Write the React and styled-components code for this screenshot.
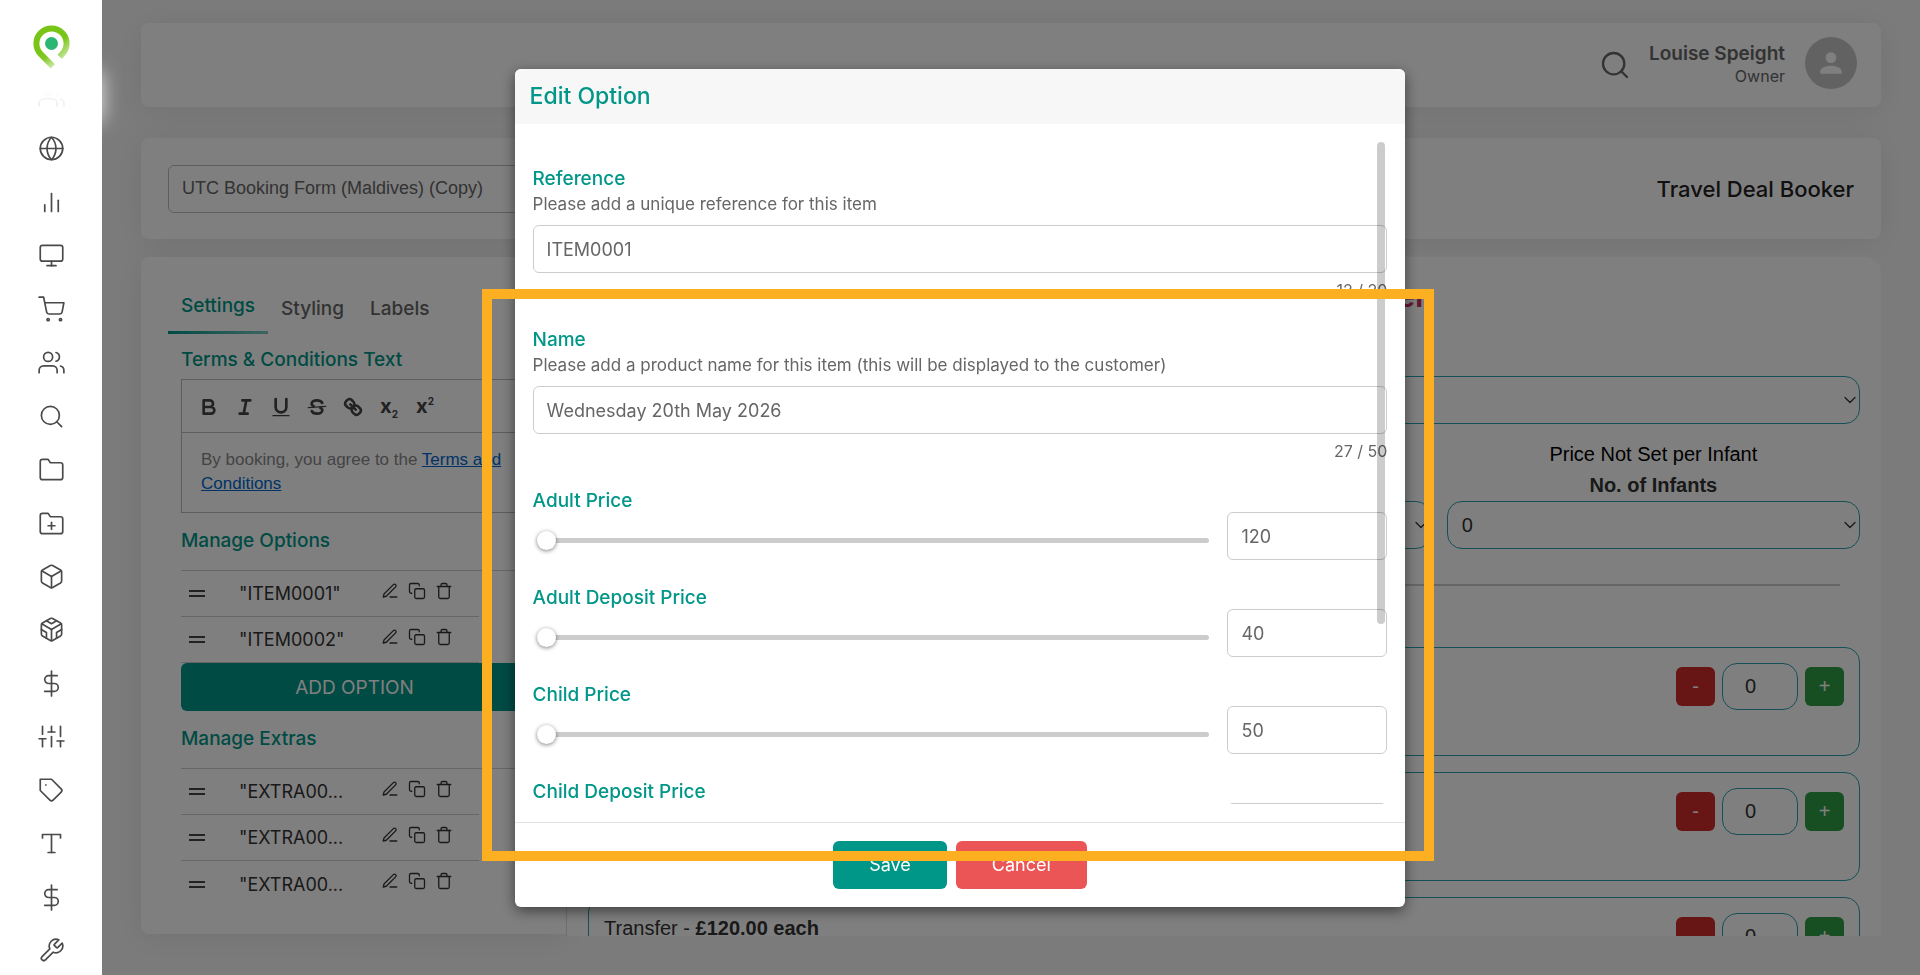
import { useState } from "react";
import styled, { createGlobalStyle } from "styled-components";
import {
  FiBarChart2, FiBox, FiChevronDown, FiCodesandbox, FiCopy, FiDollarSign, FiEdit3, FiFolder,
  FiFolderPlus, FiGlobe, FiMonitor, FiSearch, FiShoppingCart, FiSliders, FiTag, FiTool,
  FiTrash, FiType, FiUsers,
} from "react-icons/fi";
import { MdPerson } from "react-icons/md";

const NAV = [
  ["Team", FiUsers],
  ["Website", FiGlobe],
  ["Analytics", FiBarChart2],
  ["Displays", FiMonitor],
  ["Shop", FiShoppingCart],
  ["Customers", FiUsers],
  ["Search", FiSearch],
  ["Folders", FiFolder],
  ["New folder", FiFolderPlus],
  ["Products", FiBox],
  ["Packages", FiCodesandbox],
  ["Payments", FiDollarSign],
  ["Controls", FiSliders],
  ["Tags", FiTag],
  ["Text", FiType],
  ["Pricing", FiDollarSign],
  ["Tools", FiTool],
];

const PRICES = [
  ["Adult Price", "120"],
  ["Adult Deposit Price", "40"],
  ["Child Price", "50"],
  ["Child Deposit Price", "20"],
];

export default function App() {
  return (
    <Shell>
      <GlobalStyle />
      <Sidebar />
      <Main>
        <TopBar />
        <FormBar>
          <FormName aria-label="Form name" defaultValue="UTC Booking Form (Maldives) (Copy)" />
          <FormType>Travel Deal Booker</FormType>
        </FormBar>
        <Workspace>
          <SettingsPanel />
          <Preview />
        </Workspace>
      </Main>
      <Overlay>
        <EditOption />
      </Overlay>
    </Shell>
  );
}

function Sidebar() {
  return (
    <Side>
      <Brand href="#home" aria-label="Home">
        <svg width="37" height="44" viewBox="0 0 37 44" fill="none">
          <defs>
            <linearGradient id="tail" gradientUnits="userSpaceOnUse" x1="12" y1="33" x2="22" y2="43">
              <stop offset="0" stopColor="#79c517" />
              <stop offset="1" stopColor="#c9e8a4" />
            </linearGradient>
          </defs>
          <path
            d="M26.7 31.8L29.2 29.2A15.1 15.1 0 1 0 7.8 29.2L19.8 41.3"
            stroke="url(#tail)"
            strokeWidth="6"
          />
          <circle cx="18.5" cy="18.5" r="6.5" fill="#2bb673" />
        </svg>
      </Brand>
      <Nav>
        {NAV.map(([label, Icon], i) => (
          <NavLink key={i} href="#nav" aria-label={label}>
            <Icon />
          </NavLink>
        ))}
      </Nav>
      <NavFade />
    </Side>
  );
}

function TopBar() {
  return (
    <Header>
      <SearchButton aria-label="Search">
        <FiSearch />
      </SearchButton>
      <User>
        <strong>Louise Speight</strong>
        <span>Owner</span>
      </User>
      <Avatar>
        <MdPerson />
      </Avatar>
    </Header>
  );
}

function SettingsPanel() {
  return (
    <Settings>
      <Tabs>
        <Tab $active>Settings</Tab>
        <Tab>Styling</Tab>
        <Tab>Labels</Tab>
      </Tabs>
      <Section>
        <SectionTitle>Terms &amp; Conditions Text</SectionTitle>
        <Editor>
          <Toolbar>
            <Tool aria-label="Bold">
              <ToolIcon>
                <path d="M5 4h4.5a2.5 2.5 0 0 1 0 5H5zM5 9h5.5a2.5 2.5 0 0 1 0 5H5z" />
              </ToolIcon>
            </Tool>
            <Tool aria-label="Italic">
              <ToolIcon>
                <path d="M7 4h6M5 14h6M8 14l2-10" />
              </ToolIcon>
            </Tool>
            <Tool aria-label="Underline">
              <ToolIcon>
                <path d="M5 3v6a4 4 0 0 0 8 0V3" />
                <path d="M3 15.5h12" strokeWidth="1" />
              </ToolIcon>
            </Tool>
            <Tool aria-label="Strikethrough">
              <ToolIcon>
                <path d="M2.5 9.5l13-1" strokeWidth="1" />
                <path d="M12.9 6C12.5 4.8 11 4 9 4 6.8 4 5 5 5 6.5c0 1 .6 1.5 1.5 1.8M5.1 12C5.5 13.2 7 14 9 14c2.2 0 4-1 4-2.5 0-1-.6-1.5-1.5-1.8" />
              </ToolIcon>
            </Tool>
            <Tool aria-label="Link">
              <ToolIcon>
                <path d="M7 7l4 4" />
                <path d="M8.9 4.6a3.5 3.5 0 0 1 .4 4.7A3.5 3.5 0 0 1 4.6 8.9C3.2 7.5 2 6.4 4.2 4.2S7.5 3.2 8.9 4.6Z" />
                <path d="M13.4 9.1a3.5 3.5 0 0 0-4.7-.4 3.5 3.5 0 0 0 .4 4.7c1.4 1.4 2.5 2.5 4.7.4S14.8 10.5 13.4 9.1Z" />
              </ToolIcon>
            </Tool>
            <Tool aria-label="Subscript">x<sub>2</sub></Tool>
            <Tool aria-label="Superscript">x<sup>2</sup></Tool>
          </Toolbar>
          <EditorBody>
            By booking, you agree to the <a href="#terms">Terms and Conditions</a>
          </EditorBody>
        </Editor>
        <SectionTitle>Manage Options</SectionTitle>
        <ItemList items={['"ITEM0001"', '"ITEM0002"']} />
        <AddButton>ADD OPTION</AddButton>
        <SectionTitle>Manage Extras</SectionTitle>
        <ItemList items={['"EXTRA00...', '"EXTRA00...', '"EXTRA00...']} open />
      </Section>
    </Settings>
  );
}

function ItemList({ items, open }) {
  return (
    <List>
      {items.map((item, i) => (
        <Item key={i} $line={!open || i < items.length - 1}>
          <Handle />
          <ItemName>{item}</ItemName>
          <Actions>
            <RowButton aria-label="Edit"><FiEdit3 /></RowButton>
            <RowButton aria-label="Duplicate"><FiCopy /></RowButton>
            <RowButton aria-label="Delete"><FiTrash /></RowButton>
          </Actions>
        </Item>
      ))}
    </List>
  );
}

function Preview() {
  return (
    <PreviewPane>
      <PreviewTitle>Maldives Travel Deal Booker</PreviewTitle>
      <Dropdown label="Departure date" />
      <Guests>
        <Guest price="£120.00 per Adult" label="No. of Adults" value="0" />
        <Guest price="£50.00 per Child" label="No. of Children" value="0" />
        <Guest price="Price Not Set per Infant" label="No. of Infants" value="0" />
      </Guests>
      <Rule />
      <Extra name="Snorkelling" price="£60.00 each" />
      <Extra name="Dinner" price="£45.00 each" />
      <Extra name="Transfer" price="£120.00 each" />
    </PreviewPane>
  );
}

function Guest({ price, label, value }) {
  return (
    <GuestColumn>
      <span>{price}</span>
      <strong>{label}</strong>
      <Dropdown label={label} value={value} />
    </GuestColumn>
  );
}

function Dropdown({ label, value = "" }) {
  return (
    <SelectBox>
      <select aria-label={label} defaultValue={value}>
        <option value={value}>{value}</option>
      </select>
      <FiChevronDown />
    </SelectBox>
  );
}

function Extra({ name, price }) {
  const [count, setCount] = useState(0);

  return (
    <ExtraCard>
      <ExtraName>{name} - <b>{price}</b></ExtraName>
      <Step $color="#cf2a2a" onClick={() => setCount(Math.max(0, count - 1))}>-</Step>
      <Count
        aria-label={`${name} quantity`}
        value={count}
        onChange={(e) => setCount(Number(e.target.value) || 0)}
      />
      <Step $color="#2f9e44" onClick={() => setCount(count + 1)}>+</Step>
    </ExtraCard>
  );
}

function EditOption() {
  return (
    <Dialog role="dialog" aria-labelledby="dialog-title">
      <DialogTitle id="dialog-title">Edit Option</DialogTitle>
      <DialogBody>
        <Fields>
          <TextField
            id="reference"
            label="Reference"
            hint="Please add a unique reference for this item"
            value="ITEM0001"
            count="12 / 20"
          />
          <TextField
            id="name"
            label="Name"
            hint="Please add a product name for this item (this will be displayed to the customer)"
            value="Wednesday 20th May 2026"
            count="27 / 50"
          />
          {PRICES.map(([label, value]) => (
            <PriceField key={label} label={label} value={value} />
          ))}
        </Fields>
        <Thumb />
      </DialogBody>
      <DialogFooter>
        <Button $color="#009688">Save</Button>
        <Button $color="#eb5555">Cancel</Button>
      </DialogFooter>
      <Highlight />
    </Dialog>
  );
}

function TextField({ id, label, hint, value, count }) {
  return (
    <Field>
      <Label htmlFor={id}>{label}</Label>
      <Hint>{hint}</Hint>
      <Input id={id} defaultValue={value} />
      <Counter>{count}</Counter>
    </Field>
  );
}

function PriceField({ label, value }) {
  const id = label.toLowerCase().replace(/ /g, "-");

  return (
    <Price>
      <Label htmlFor={id}>{label}</Label>
      <PriceRow>
        <Slider type="range" min="0" max="100000" defaultValue="0" aria-label={`${label} slider`} />
        <Input id={id} defaultValue={value} />
      </PriceRow>
    </Price>
  );
}

const GlobalStyle = createGlobalStyle`
  :root {
    --teal: #009688;
    --text: #666;
    --outline: #2aa0ac;
    --sans: Inter, sans-serif;
    --arial: "Liberation Sans", Arial, sans-serif;
  }
  * {
    box-sizing: border-box;
  }
  body {
    margin: 0;
    font-family: var(--sans);
    color: var(--text);
  }
  button, input, select {
    font-family: inherit;
    color: inherit;
  }
  button {
    border: 0;
    padding: 0;
    background: none;
    cursor: pointer;
  }
`;

const Shell = styled.div`
  display: flex;
  height: 100vh;
  overflow: hidden;
  background: #f7f7f7;
`;

const Side = styled.aside`
  position: relative;
  z-index: 10;
  flex: 0 0 102px;
  display: flex;
  flex-direction: column;
  background: #fff;
`;

const Brand = styled.a`
  height: 82px;
  padding: 25px 0 0 33px;
`;

const Nav = styled.nav`
  flex: 1;
  display: flex;
  flex-direction: column;
  align-items: center;
  justify-content: space-between;
  padding-bottom: 11px;
`;

const NavLink = styled.a`
  display: flex;
  color: #4a4a4a;
  svg {
    width: 27px;
    height: 27px;
    stroke-width: 1.5;
  }
`;

const NavFade = styled.div`
  position: absolute;
  top: 72px;
  left: 0;
  width: 100%;
  height: 50px;
  background: linear-gradient(#fff 36%, rgba(255, 255, 255, 0.8));
  box-shadow: 0 0 20px rgba(255, 255, 255, 0.8);
`;

const Main = styled.main`
  flex: 1;
  min-width: 0;
  display: flex;
  flex-direction: column;
  padding: 23px 39px 39px;
`;

const Card = styled.section`
  background: #fff;
  border-radius: 8px;
  box-shadow: 0 4px 32px rgba(0, 0, 0, 0.08);
`;

const Header = styled(Card)`
  display: flex;
  align-items: center;
  justify-content: flex-end;
  height: 84px;
  padding: 0 24px 4px;
  margin-bottom: 31px;
`;

const IconButton = styled.button`
  display: flex;
  svg {
    stroke-width: 1.75;
  }
`;

const SearchButton = styled(IconButton)`
  margin-top: 4px;
  svg {
    width: 32px;
    height: 32px;
  }
`;

const RowButton = styled(IconButton)`
  color: #333;
  svg {
    width: 18px;
    height: 18px;
  }
`;

const User = styled.div`
  display: flex;
  flex-direction: column;
  align-items: flex-end;
  margin: 4px 20px 0 18px;
  line-height: 23px;
  strong {
    font-size: 19px;
    font-weight: 600;
  }
  span {
    font-size: 16px;
  }
`;

const Avatar = styled.div`
  display: flex;
  align-items: center;
  justify-content: center;
  width: 52px;
  height: 52px;
  border-radius: 50%;
  background: #c4c4c4;
  color: #fff;
  svg {
    width: 32px;
    height: 32px;
  }
`;

const FormBar = styled(Card)`
  display: flex;
  align-items: center;
  justify-content: space-between;
  height: 101px;
  padding: 0 27px;
  margin-bottom: 18px;
`;

const FormName = styled.input`
  width: 30%;
  height: 48px;
  padding: 0 13px;
  border: 1px solid #bbb;
  border-radius: 6px;
  background: #fff;
  font-family: var(--arial);
  font-size: 18px;
`;

const FormType = styled.span`
  color: #222;
  font-size: 22px;
  font-weight: 500;
`;

const Workspace = styled.div`
  flex: 1;
  min-height: 0;
  display: flex;
  align-items: stretch;
`;

const Settings = styled(Card)`
  flex: 0 0 425px;
  padding: 25px 27px 0;
  margin-bottom: 2px;
  border-bottom-right-radius: 0;
`;

const Tabs = styled.div`
  display: flex;
`;

const Tab = styled.button`
  height: 52px;
  padding: 0 13px;
  padding-bottom: ${({ $active }) => ($active ? 2 : 0)}px;
  border-bottom: ${({ $active }) => ($active ? "3px solid" : 0)};
  border-image: linear-gradient(to right, #009688, #7fcac3) 1;
  color: ${({ $active }) => ($active ? "var(--teal)" : "var(--text)")};
  font-size: 19px;
  font-weight: 500;
`;

const Section = styled.div`
  padding: 15px 11px 0 13px;
`;

const SectionTitle = styled.h3`
  margin: 0;
  color: var(--teal);
  font-size: 19px;
  font-weight: 500;
  line-height: 22px;
`;

const Editor = styled.div`
  margin: 8px 0 17px;
  border: 1px solid #bbb;
  font-family: var(--arial);
`;

const Toolbar = styled.div`
  display: flex;
  align-items: center;
  height: 53px;
  padding-left: 9px;
  border-bottom: 1px solid #bbb;
`;

const Tool = styled.button`
  width: 36px;
  height: 36px;
  color: #444;
  font-family: var(--sans);
  font-size: 20px;
  font-weight: 700;
  line-height: 24px;
  svg {
    vertical-align: middle;
  }
  sub, sup {
    font-size: 10px;
    line-height: 0;
  }
`;

const ToolIcon = styled.svg.attrs({ viewBox: "0 0 18 18", width: 24, height: 24 })`
  fill: none;
  stroke: currentColor;
  stroke-width: 2;
  stroke-linecap: round;
  stroke-linejoin: round;
`;

const EditorBody = styled.div`
  height: 79px;
  padding: 15px 19px;
  color: #888;
  font-size: 17px;
  line-height: 24px;
  a {
    color: #06c;
  }
`;

const List = styled.ul`
  margin: 18px 0 0;
  padding: 0;
  border-top: 1px solid #ccc;
  list-style: none;
`;

const Item = styled.li`
  display: flex;
  align-items: center;
  height: 46px;
  margin-right: 49px;
  padding-left: 8px;
  border-bottom: ${({ $line }) => ($line ? "1px solid #ccc" : 0)};
  color: #333;
`;

const Handle = styled.span`
  width: 16px;
  height: 7px;
  margin-right: 34px;
  border: solid #444;
  border-width: 2px 0;
`;

const ItemName = styled.span`
  width: 142px;
  font-size: 18px;
`;

const Actions = styled.div`
  display: flex;
  gap: 9px;
  padding-bottom: 6px;
`;

const AddButton = styled.button`
  width: 100%;
  height: 48px;
  margin-bottom: 17px;
  border-radius: 6px;
  background: var(--teal);
  color: #fff;
  font-size: 19px;
`;

const PreviewPane = styled.section`
  flex: 1;
  overflow: hidden;
  padding: 23px 21px 0;
  border-left: 1px solid #ddd;
  border-top-right-radius: 16px;
  background: #fff;
  color: #333;
  font-family: var(--arial);
  font-size: 20px;
`;

const PreviewTitle = styled.h2`
  margin: 0 0 63px;
  color: #c8305f;
  font-size: 30px;
  font-weight: 700;
  line-height: 33px;
  text-align: center;
`;

const SelectBox = styled.div`
  display: grid;
  align-items: center;
  select, svg {
    grid-area: 1 / 1;
  }
  select {
    width: 100%;
    height: 48px;
    padding: 0 14px;
    border: 1px solid var(--outline);
    border-radius: 15px;
    background: #fff;
    font-size: 20px;
    appearance: none;
  }
  svg {
    justify-self: end;
    width: 20px;
    height: 20px;
    stroke-width: 1.5;
    pointer-events: none;
  }
`;

const Guests = styled.div`
  display: grid;
  grid-template-columns: repeat(3, 1fr);
  gap: 16px;
  margin-top: 15px;
`;

const GuestColumn = styled.div`
  display: flex;
  flex-direction: column;
  text-align: center;
  line-height: 31px;
  span {
    color: #000;
  }
`;

const Rule = styled.hr`
  height: 2px;
  margin: 35px 20px 61px;
  border: 0;
  background: #ccc;
`;

const ExtraCard = styled.div`
  display: flex;
  align-items: flex-start;
  height: 109px;
  margin-bottom: 16px;
  padding: 15px;
  border: 1px solid var(--outline);
  border-radius: 15px;
`;

const ExtraName = styled.span`
  flex: 1;
  line-height: 30px;
`;

const Step = styled.button`
  width: 39px;
  height: 39px;
  margin-top: 4px;
  border-radius: 6px;
  background: ${({ $color }) => $color};
  color: #fff;
  font-size: 20px;
`;

const Count = styled.input`
  width: 76px;
  height: 47px;
  margin: 0 7px;
  padding: 0 22px;
  border: 1px solid var(--outline);
  border-radius: 15px;
  background: #fff;
  font-size: 20px;
`;

const Overlay = styled.div`
  position: fixed;
  inset: 0;
  z-index: 5;
  display: flex;
  align-items: center;
  justify-content: center;
  padding-top: 1px;
  background: rgba(0, 0, 0, 0.5);
`;

const Dialog = styled.div`
  position: relative;
  display: flex;
  flex-direction: column;
  width: 46.4%;
  height: 86%;
  border-radius: 6px;
  background: #fff;
  box-shadow: 0 4px 14px rgba(0, 0, 0, 0.5);
`;

const DialogTitle = styled.h2`
  margin: 0;
  padding: 0 15px;
  border-radius: 6px 6px 0 0;
  background: #f7f7f7;
  color: var(--teal);
  font-size: 23px;
  font-weight: 500;
  line-height: 55px;
`;

const DialogBody = styled.div`
  position: relative;
  flex: 1;
  min-height: 0;
  padding: 18px;
`;

const Fields = styled.form`
  height: 100%;
  padding-top: 26px;
  overflow: auto;
  scrollbar-width: none;
`;

const Thumb = styled.div`
  position: absolute;
  top: 18px;
  right: 20px;
  width: 8px;
  height: 69%;
  border-radius: 4px;
  background: rgba(0, 0, 0, 0.2);
`;

const Field = styled.div`
  display: flex;
  flex-direction: column;
  margin-bottom: 29px;
`;

const Label = styled.label`
  color: var(--teal);
  font-size: 19px;
  font-weight: 500;
  line-height: 22px;
`;

const Hint = styled.p`
  margin: 4px 0 11px;
  font-size: 17px;
  line-height: 20px;
`;

const Input = styled.input`
  height: 48px;
  padding: 0 13px;
  border: 1px solid #ccc;
  border-radius: 6px;
  background: #fff;
  font-size: 18px;
`;

const Counter = styled.span`
  margin-top: 7px;
  font-size: 16px;
  line-height: 20px;
  text-align: right;
`;

const Price = styled.div`
  margin-bottom: 27px;
`;

const PriceRow = styled.div`
  display: grid;
  grid-template-columns: 1fr 160px;
  gap: 18px;
  align-items: center;
`;

const Slider = styled.input`
  height: 5px;
  margin: 9px 0 0 4px;
  border-radius: 3px;
  background: #ccc;
  appearance: none;
  &::-webkit-slider-thumb {
    appearance: none;
    width: 19px;
    height: 19px;
    border-radius: 50%;
    background: #fff;
    box-shadow: 0 1px 4px rgba(0, 0, 0, 0.5);
  }
`;

const DialogFooter = styled.footer`
  display: flex;
  justify-content: center;
  gap: 9px;
  padding: 18px;
  border-top: 1px solid #e3e3e3;
`;

const Button = styled.button`
  height: 48px;
  padding: 0 36px;
  border-radius: 6px;
  background: ${({ $color }) => $color};
  color: #fff;
  font-size: 18px;
`;

const Highlight = styled.div`
  position: absolute;
  inset: 220px -29px 46px -33px;
  border: 10px solid #fdaf22;
  pointer-events: none;
`;
